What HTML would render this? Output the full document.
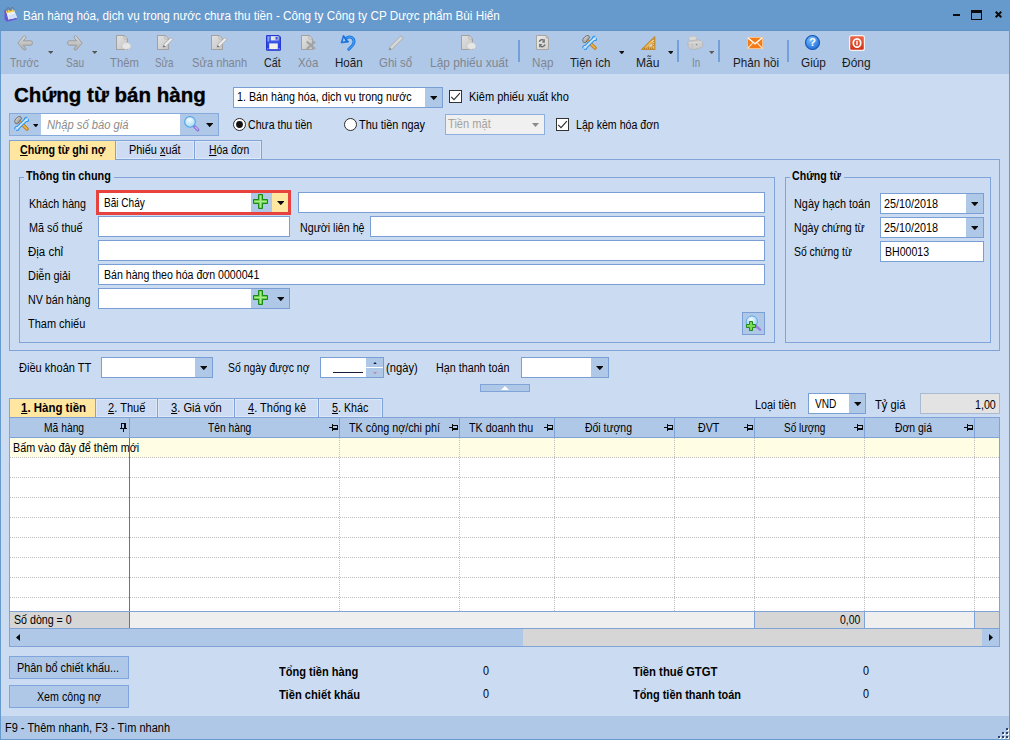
<!DOCTYPE html>
<html lang="vi">
<head>
<meta charset="utf-8">
<title>Bán hàng hóa, dịch vụ trong nước chưa thu tiền</title>
<style>
html,body{margin:0;padding:0;}
body{width:1010px;height:740px;overflow:hidden;background:#6699cc;font-family:"Liberation Sans",sans-serif;font-size:12px;color:#000;position:relative;}
.b{position:absolute;box-sizing:border-box;display:block;}
.x{position:absolute;white-space:nowrap;line-height:0;height:0;}
u{text-decoration:underline;}
</style>
</head>
<body>
<div class="b" style="left:0px;top:0px;width:1010px;height:740px;background:#6699cc;"></div>
<div class="b" style="left:1px;top:30px;width:1008px;height:1px;background:#5f93c8;"></div>
<div class="b" style="left:1px;top:31px;width:1008px;height:43px;background:#afc8e8;"></div>
<div class="b" style="left:1px;top:74px;width:1008px;height:642px;background:#cbdcf2;"></div>
<div class="b" style="left:1px;top:716px;width:1008px;height:23px;background:#afc8e8;"></div>
<div class="x" style="top:16.34px;font-size:12px;left:23.40px;transform:scaleX(0.9773);transform-origin:0 50%;color:#fff;">Bán hàng hóa, dịch vụ trong nước chưa thu tiền - Công ty Công ty CP Dược phẩm Bùi Hiển</div>
<div class="x" style="top:63.00px;font-size:13px;left:10.30px;transform:scaleX(0.8109);transform-origin:0 50%;color:#80868f;">Trước</div>
<div class="x" style="top:63.00px;font-size:13px;left:66.40px;transform:scaleX(0.7784);transform-origin:0 50%;color:#80868f;">Sau</div>
<div class="x" style="top:63.00px;font-size:13px;left:110.20px;transform:scaleX(0.8666);transform-origin:0 50%;color:#80868f;">Thêm</div>
<div class="x" style="top:63.00px;font-size:13px;left:155.20px;transform:scaleX(0.7517);transform-origin:0 50%;color:#80868f;">Sửa</div>
<div class="x" style="top:63.00px;font-size:13px;left:192.00px;transform:scaleX(0.8577);transform-origin:0 50%;color:#80868f;">Sửa nhanh</div>
<div class="x" style="top:63.00px;font-size:13px;left:264.40px;transform:scaleX(0.8204);transform-origin:0 50%;color:#1b1b1b;">Cất</div>
<div class="x" style="top:63.00px;font-size:13px;left:297.70px;transform:scaleX(0.8772);transform-origin:0 50%;color:#80868f;">Xóa</div>
<div class="x" style="top:63.00px;font-size:13px;left:334.60px;transform:scaleX(0.8913);transform-origin:0 50%;color:#1b1b1b;">Hoãn</div>
<div class="x" style="top:63.00px;font-size:13px;left:379.00px;transform:scaleX(0.8835);transform-origin:0 50%;color:#80868f;">Ghi sổ</div>
<div class="x" style="top:63.00px;font-size:13px;left:430.20px;transform:scaleX(0.9168);transform-origin:0 50%;color:#80868f;">Lập phiếu xuất</div>
<div class="x" style="top:63.00px;font-size:13px;left:531.60px;transform:scaleX(0.8975);transform-origin:0 50%;color:#80868f;">Nạp</div>
<div class="x" style="top:63.00px;font-size:13px;left:570.20px;transform:scaleX(0.8828);transform-origin:0 50%;color:#1b1b1b;">Tiện ích</div>
<div class="x" style="top:63.00px;font-size:13px;left:636.30px;transform:scaleX(0.9290);transform-origin:0 50%;color:#1b1b1b;">Mẫu</div>
<div class="x" style="top:63.00px;font-size:13px;left:692.00px;transform:scaleX(0.7562);transform-origin:0 50%;color:#80868f;">In</div>
<div class="x" style="top:63.00px;font-size:13px;left:732.50px;transform:scaleX(0.8962);transform-origin:0 50%;color:#1b1b1b;">Phản hồi</div>
<div class="x" style="top:63.00px;font-size:13px;left:801.10px;transform:scaleX(0.9070);transform-origin:0 50%;color:#1b1b1b;">Giúp</div>
<div class="x" style="top:63.00px;font-size:13px;left:842.00px;transform:scaleX(0.9203);transform-origin:0 50%;color:#1b1b1b;">Đóng</div>
<div class="b" style="left:518px;top:40px;width:2px;height:22px;background:#73a0d9;"></div>
<div class="b" style="left:677px;top:40px;width:2px;height:22px;background:#73a0d9;"></div>
<div class="b" style="left:718px;top:40px;width:2px;height:22px;background:#73a0d9;"></div>
<div class="b" style="left:787px;top:40px;width:2px;height:22px;background:#73a0d9;"></div>
<svg class="b" style="left:47.9px;top:50.7px" width="5.4" height="3" viewBox="0 0 5.4 3"><polygon points="0,0 5.4,0 2.7,3" fill="#555"/></svg>
<svg class="b" style="left:91.89999999999999px;top:50.7px" width="5.4" height="3" viewBox="0 0 5.4 3"><polygon points="0,0 5.4,0 2.7,3" fill="#555"/></svg>
<svg class="b" style="left:618.7px;top:50.6px" width="5.6" height="3.4" viewBox="0 0 5.6 3.4"><polygon points="0,0 5.6,0 2.8,3.4" fill="#111"/></svg>
<svg class="b" style="left:667.5px;top:50.6px" width="5.6" height="3.4" viewBox="0 0 5.6 3.4"><polygon points="0,0 5.6,0 2.8,3.4" fill="#111"/></svg>
<svg class="b" style="left:708.9px;top:50.8px" width="5.4" height="3.2" viewBox="0 0 5.4 3.2"><polygon points="0,0 5.4,0 2.7,3.2" fill="#5c5c5c"/></svg>
<svg class="b" style="left:16.5px;top:34.5px" width="16" height="16" viewBox="0 0 16 16"><defs><linearGradient id="ag" x1="0" y1="0" x2="0" y2="1"><stop offset="0" stop-color="#dadada"/><stop offset="1" stop-color="#aeaeae"/></linearGradient></defs><path d="M0.8 8 L6.6 1.2 Q7.6 0.4 8.6 1.2 Q9.4 2 8.6 3 L6.2 5.8 L13.8 5.8 Q15.4 5.8 15.4 8 Q15.4 10.2 13.8 10.2 L6.2 10.2 L8.6 13 Q9.4 14 8.6 14.8 Q7.6 15.6 6.6 14.8 Z" fill="url(#ag)" stroke="#9c9c9c" stroke-width="1" stroke-linejoin="round"/></svg>
<svg class="b" style="left:66.5px;top:34.5px" width="16" height="16" viewBox="0 0 16 16"><g transform="translate(16,0) scale(-1,1)"><defs><linearGradient id="ag2" x1="0" y1="0" x2="0" y2="1"><stop offset="0" stop-color="#dadada"/><stop offset="1" stop-color="#aeaeae"/></linearGradient></defs><path d="M0.8 8 L6.6 1.2 Q7.6 0.4 8.6 1.2 Q9.4 2 8.6 3 L6.2 5.8 L13.8 5.8 Q15.4 5.8 15.4 8 Q15.4 10.2 13.8 10.2 L6.2 10.2 L8.6 13 Q9.4 14 8.6 14.8 Q7.6 15.6 6.6 14.8 Z" fill="url(#ag2)" stroke="#9c9c9c" stroke-width="1" stroke-linejoin="round"/></g></svg>
<svg class="b" style="left:116px;top:35px" width="17" height="16" viewBox="0 0 17 16"><defs><linearGradient id="dg1" x1="0" y1="0" x2="1" y2="1"><stop offset="0" stop-color="#e3e3e3"/><stop offset="1" stop-color="#c4c4c4"/></linearGradient></defs><path d="M0.5 0.5 H8 L11.5 4 V14.5 H0.5 Z" fill="url(#dg1)" stroke="#a2a2a2" stroke-width="1.1"/><path d="M8 0.5 V4 H11.5 Z" fill="#efefef" stroke="#a9a9a9" stroke-width="0.8"/><path d="M10 6.2 l1.2 0.9 1.5-0.5 0.7 1.4 1.5 0.3 0 1.6 1.2 1-0.9 1.3 0.3 1.5-1.5 0.5-0.6 1.4-1.6-0.2-1.2 1-1.3-1-1.6 0.2-0.5-1.5-1.4-0.7 0.4-1.5-0.8-1.4 1.2-1 0.1-1.6 1.6-0.2 0.8-1.4 1.5 0.6 z" fill="#e6e6e6" stroke="#c4c4c4" stroke-width="0.6" transform="translate(0.8,2.5) scale(0.9,0.75)"/></svg>
<svg class="b" style="left:157px;top:35px" width="17" height="16" viewBox="0 0 17 16"><defs><linearGradient id="dg2" x1="0" y1="0" x2="1" y2="1"><stop offset="0" stop-color="#e3e3e3"/><stop offset="1" stop-color="#c4c4c4"/></linearGradient></defs><path d="M0.5 0.5 H8 L11.5 4 V14.5 H0.5 Z" fill="url(#dg2)" stroke="#a2a2a2" stroke-width="1.1"/><path d="M8 0.5 V4 H11.5 Z" fill="#efefef" stroke="#a9a9a9" stroke-width="0.8"/><path d="M6.2 12.2 L7 9.2 L13.8 2.6 L15.8 4.6 L9 11.4 Z" fill="#ededed" stroke="#a9a9a9" stroke-width="0.9" stroke-linejoin="round"/><path d="M6.2 12.2 L6.8 10.2 L8.2 11.6 Z" fill="#555"/></svg>
<svg class="b" style="left:211px;top:35px" width="17" height="16" viewBox="0 0 17 16"><defs><linearGradient id="dg3" x1="0" y1="0" x2="1" y2="1"><stop offset="0" stop-color="#e3e3e3"/><stop offset="1" stop-color="#c4c4c4"/></linearGradient></defs><path d="M0.5 0.5 H8 L11.5 4 V14.5 H0.5 Z" fill="url(#dg3)" stroke="#a2a2a2" stroke-width="1.1"/><path d="M8 0.5 V4 H11.5 Z" fill="#efefef" stroke="#a9a9a9" stroke-width="0.8"/><path d="M6.2 12.2 L7 9.2 L13.8 2.6 L15.8 4.6 L9 11.4 Z" fill="#ededed" stroke="#a9a9a9" stroke-width="0.9" stroke-linejoin="round"/><path d="M6.2 12.2 L6.8 10.2 L8.2 11.6 Z" fill="#555"/></svg>
<svg class="b" style="left:301px;top:35px" width="17" height="16" viewBox="0 0 17 16"><defs><linearGradient id="dg4" x1="0" y1="0" x2="1" y2="1"><stop offset="0" stop-color="#e3e3e3"/><stop offset="1" stop-color="#c4c4c4"/></linearGradient></defs><path d="M0.5 0.5 H8 L11.5 4 V14.5 H0.5 Z" fill="url(#dg4)" stroke="#a2a2a2" stroke-width="1.1"/><path d="M8 0.5 V4 H11.5 Z" fill="#efefef" stroke="#a9a9a9" stroke-width="0.8"/><path d="M5.8 6.5 L14 14 M14 6.5 L5.8 14" stroke="#a2a2a2" stroke-width="2.2"/></svg>
<svg class="b" style="left:461px;top:35px" width="17" height="16" viewBox="0 0 17 16"><defs><linearGradient id="dg5" x1="0" y1="0" x2="1" y2="1"><stop offset="0" stop-color="#e3e3e3"/><stop offset="1" stop-color="#c4c4c4"/></linearGradient></defs><path d="M0.5 0.5 H8 L11.5 4 V14.5 H0.5 Z" fill="url(#dg5)" stroke="#a2a2a2" stroke-width="1.1"/><path d="M8 0.5 V4 H11.5 Z" fill="#efefef" stroke="#a9a9a9" stroke-width="0.8"/><path d="M10 6.2 l1.2 0.9 1.5-0.5 0.7 1.4 1.5 0.3 0 1.6 1.2 1-0.9 1.3 0.3 1.5-1.5 0.5-0.6 1.4-1.6-0.2-1.2 1-1.3-1-1.6 0.2-0.5-1.5-1.4-0.7 0.4-1.5-0.8-1.4 1.2-1 0.1-1.6 1.6-0.2 0.8-1.4 1.5 0.6 z" fill="#e6e6e6" stroke="#c4c4c4" stroke-width="0.6" transform="translate(0.8,2.5) scale(0.9,0.75)"/></svg>
<svg class="b" style="left:265.5px;top:34.5px" width="15" height="16" viewBox="0 0 15 16"><defs><linearGradient id="sg" x1="0" y1="0" x2="0" y2="1"><stop offset="0" stop-color="#5f7cf2"/><stop offset="0.5" stop-color="#3350e8"/><stop offset="1" stop-color="#2238dc"/></linearGradient><linearGradient id="sg2" x1="0" y1="0" x2="1" y2="0"><stop offset="0" stop-color="#f2f2f4"/><stop offset="1" stop-color="#bfc0c8"/></linearGradient></defs><path d="M0.6 0.6 H13 L14.4 2 V15.2 H0.6 Z" fill="url(#sg)" stroke="#1c2fd0" stroke-width="1"/><rect x="1.6" y="1.4" width="1.6" height="5" fill="#8ea2f6"/><rect x="5" y="1.2" width="7.6" height="4.2" fill="url(#sg2)"/><rect x="9.6" y="2" width="2" height="2.6" fill="#3350e8"/><rect x="3.2" y="8.4" width="8.6" height="5.8" fill="#f3f0ea"/><rect x="1.4" y="13.4" width="1" height="1" fill="#dfe4ff"/><rect x="12.6" y="13.4" width="1" height="1" fill="#dfe4ff"/></svg>
<svg class="b" style="left:340px;top:34px" width="17" height="17" viewBox="0 0 17 17"><path d="M6 4.4 C9.5 1.6 14.2 3.4 14 8 C13.8 11 11 13 8.8 15.2" fill="none" stroke="#1c72dc" stroke-width="3" stroke-linecap="round"/><path d="M6 4.4 C9.5 1.6 14.2 3.4 14 8 C13.8 11 11 13 8.8 15.2" fill="none" stroke="#3f9cf3" stroke-width="1.3" stroke-linecap="round"/><path d="M3.4 1 L1 9 L8.8 8 Z" fill="#1c72dc" stroke="#1c72dc" stroke-width="0.8" stroke-linejoin="round"/><path d="M3.7 3.8 L2.7 7.4 L5.6 7 Z" fill="#a6cdf5"/></svg>
<svg class="b" style="left:387.5px;top:34.5px" width="16" height="16" viewBox="0 0 16 16"><path d="M1 15 L2 11.6 L12.2 1.4 Q13 0.7 13.8 1.5 L14.6 2.3 Q15.3 3.1 14.6 3.8 L4.4 14 Z" fill="#d7d7d7" stroke="#a8a8a8" stroke-width="0.9" stroke-linejoin="round"/><path d="M1 15 L1.8 12.4 L3.6 14.2 Z" fill="#8a8a8a"/></svg>
<svg class="b" style="left:536px;top:35px" width="13" height="15" viewBox="0 0 13 15"><defs><linearGradient id="ng" x1="0" y1="0" x2="1" y2="1"><stop offset="0" stop-color="#ececec"/><stop offset="1" stop-color="#cfcfcf"/></linearGradient></defs><path d="M0.5 0.5 H10.2 L12.5 3 V14.5 H0.5 Z" fill="url(#ng)" stroke="#a9a6a2" stroke-width="1"/><path d="M10.2 0.5 V3 H12.5 Z" fill="#bdbdbd" stroke="#a9a6a2" stroke-width="0.6"/><path d="M3.3 6.8 C4 4.6 6.4 4.2 7.8 5.2" fill="none" stroke="#6e6e6e" stroke-width="1.5"/><path d="M8.8 3.8 L8.8 7.8 L5.8 7.4 Z" fill="#6e6e6e"/><path d="M9 9.6 C8.2 11.8 5.8 12.2 4.4 11.2" fill="none" stroke="#6e6e6e" stroke-width="1.5"/><path d="M3.2 12.8 L3.2 8.8 L6.4 9.2 Z" fill="#6e6e6e"/></svg>
<svg class="b" style="left:582px;top:34.5px" width="15" height="15" viewBox="0 0 15 15"><defs><linearGradient id="hm1" x1="0" y1="0" x2="1" y2="1"><stop offset="0" stop-color="#f0f0f0"/><stop offset="1" stop-color="#7c7c7c"/></linearGradient></defs><path d="M5.2 5.4 L13 13" stroke="#b87a1c" stroke-width="3.4" stroke-linecap="round"/><path d="M5.2 5.4 L13 13" stroke="#f2b548" stroke-width="1.7" stroke-linecap="round"/><path d="M0.8 6.4 Q0.2 4 2.4 2.2 L4.6 0.6 Q6 0 7 1.2 L7.6 2.6 L3.4 7.8 L1.6 7.6 Z" fill="url(#hm1)" stroke="#5c5c5c" stroke-width="0.8" stroke-linejoin="round"/><path d="M3 12.6 L12.4 3.4" stroke="#2f95ea" stroke-width="3.8" stroke-linecap="butt"/><circle cx="12.6" cy="3.4" r="2.7" fill="#2f95ea"/><circle cx="2.9" cy="12.5" r="2.6" fill="#2f95ea"/><path d="M3 12.6 L12.4 3.4" stroke="#cfe8fc" stroke-width="1.7"/><circle cx="12.6" cy="3.4" r="1.5" fill="#cfe8fc"/><circle cx="2.9" cy="12.5" r="1.4" fill="#cfe8fc"/><path d="M12.8 3.2 L15.6 0.4" stroke="#afc8e8" stroke-width="2"/><path d="M2.8 12.6 L0 15.4" stroke="#afc8e8" stroke-width="1.8"/></svg>
<svg class="b" style="left:640.5px;top:35.5px" width="15" height="14" viewBox="0 0 15 14"><defs><linearGradient id="rg" x1="0" y1="0" x2="0" y2="1"><stop offset="0" stop-color="#f8d88e"/><stop offset="1" stop-color="#eeb550"/></linearGradient></defs><path d="M13.8 0.8 V13.4 H0.8 Z" fill="url(#rg)" stroke="#c58a30" stroke-width="1.2" stroke-linejoin="round"/><path d="M11.2 6.6 V11 H6.6 Z" fill="#dfe9f6" stroke="#c58a30" stroke-width="0.8"/><path d="M3.5 13 v-1.4 M5.5 13 v-1.4 M7.5 13 v-1.4 M9.5 13 v-1.4 M11.5 13 v-1.4 M13.4 3.5 h-1.2 M13.4 5.5 h-1.2 M13.4 7.5 h-1.2 M13.4 9.5 h-1.2" stroke="#9c6a18" stroke-width="0.7"/></svg>
<svg class="b" style="left:687px;top:35px" width="17" height="16" viewBox="0 0 17 16"><path d="M2.6 6.2 L1.9 2.6 Q1.8 1.5 2.9 1.4 L7.6 1 Q8.6 1 8.9 1.9 L10.2 6 Z" fill="#d9d9d9" stroke="#bcbcbc" stroke-width="0.8"/><path d="M1 8.6 Q0.9 6.4 3 6 L10.4 4.8 Q12 4.6 13.2 5.4 L15 6.8 Q15.9 7.6 15.8 8.8 L15.6 11 Q15.4 12.2 14.2 12.6 L6.4 14.6 Q4.8 14.9 3.6 14 L1.8 12.6 Q1 12 1 10.8 Z" fill="#cdcdcd" stroke="#b3b3b3" stroke-width="0.8"/><path d="M5.2 8 L5.2 14.4" stroke="#bdbdbd" stroke-width="0.8"/><path d="M1.6 7.4 L5.2 8 L15 6.8" fill="none" stroke="#dedede" stroke-width="0.9"/><circle cx="9.6" cy="9.6" r="0.8" fill="#909090"/></svg>
<svg class="b" style="left:747px;top:37px" width="16" height="12" viewBox="0 0 16 12"><rect x="0" y="0" width="16" height="12" fill="#f47c18"/><rect x="0.4" y="0.4" width="15.2" height="11.2" fill="none" stroke="#fbd3a8" stroke-width="0.8"/><path d="M1 1 L8 6.8 L15 1" fill="none" stroke="#fff" stroke-width="1.5"/><path d="M1 11 L5.6 6.2 M15 11 L10.4 6.2" fill="none" stroke="#fde3c8" stroke-width="1.1"/></svg>
<svg class="b" style="left:805px;top:35px" width="15" height="15" viewBox="0 0 15 15"><defs><radialGradient id="hg" cx="0.4" cy="0.3" r="0.8"><stop offset="0" stop-color="#7cc0ff"/><stop offset="1" stop-color="#1565d8"/></radialGradient></defs><circle cx="7.5" cy="7.5" r="7" fill="url(#hg)" stroke="#1d5cb8" stroke-width="1.2"/><text x="7.5" y="11.4" font-family="Liberation Sans, sans-serif" font-size="11" font-weight="bold" fill="#fff" text-anchor="middle">?</text></svg>
<svg class="b" style="left:849px;top:35px" width="16" height="16" viewBox="0 0 16 16"><defs><linearGradient id="cg" x1="0" y1="0" x2="0" y2="1"><stop offset="0" stop-color="#f0694a"/><stop offset="1" stop-color="#cf2f14"/></linearGradient></defs><rect x="0.6" y="0.6" width="14.8" height="14.8" rx="2" fill="url(#cg)" stroke="#f3f3f3" stroke-width="1.2"/><ellipse cx="8" cy="8" rx="3.7" ry="4.2" fill="none" stroke="#fff" stroke-width="1.7"/><rect x="7.3" y="5.8" width="1.4" height="4.4" fill="#fff"/></svg>
<svg class="b" style="left:4px;top:7px" width="14" height="15" viewBox="0 0 14 15"><path d="M0.4 3 L2.2 2.4 L4.2 12.6 L12.4 10.8 L12.8 12.2 L3 14.8 L0.6 12.6 Z" fill="#6a58d2"/><path d="M2 3.8 L9.8 2.6 L13 10.4 L4.4 12.4 Z" fill="#e9f1ff"/><path d="M5 8 L11.4 6.6 L13 10.4 L4.4 12.4 Z" fill="#cfe0fb"/><path d="M2 3.8 L9.8 2.6 L10.6 4.6 L2.6 6.2 Z" fill="#f7d046"/><path d="M3.4 4.6 C2.4 1.4 3.6 0.2 4.6 0.6 C5.6 1 6 2.8 6 4" fill="none" stroke="#6e6e78" stroke-width="0.9"/><path d="M7.2 4 C6.4 0.8 7.6 -0.2 8.6 0.3 C9.6 0.8 9.8 2.4 9.8 3.4" fill="none" stroke="#6e6e78" stroke-width="0.9"/></svg>
<div class="b" style="left:953px;top:14px;width:7px;height:2px;background:#0b0b0b;"></div>
<div class="b" style="left:971px;top:10px;width:11px;height:10px;border:1px solid #0b0b0b;border-top-width:3px;"></div>
<svg class="b" style="left:995px;top:11px" width="7" height="7" viewBox="0 0 7 7"><path d="M0.7 0.7 L6.3 6.3 M6.3 0.7 L0.7 6.3" stroke="#0b0b0b" stroke-width="2"/></svg>
<div class="x" style="top:94.72px;font-size:21px;left:13.80px;transform:scaleX(0.9783);transform-origin:0 50%;font-weight:bold;-webkit-text-stroke:0.35px #000;">Chứng từ bán hàng</div>
<div class="b" style="left:233px;top:87px;width:210px;height:21px;background:#fff;border:1px solid #7a9fd5;"></div>
<div class="b" style="left:425px;top:88px;width:17px;height:19px;background:#afc8e8;"></div>
<svg class="b" style="left:429.7px;top:96px" width="7.6" height="4.2" viewBox="0 0 7.6 4.2"><polygon points="0,0 7.6,0 3.8,4.2" fill="#0a0a0a"/></svg>
<div class="x" style="top:96.84px;font-size:12px;left:237.40px;transform:scaleX(0.8937);transform-origin:0 50%;">1. Bán hàng hóa, dịch vụ trong nước</div>
<div class="b" style="left:449px;top:90px;width:13px;height:13px;background:#fff;border:1px solid #333;"></div>
<svg class="b" style="left:449px;top:90px" width="13" height="13" viewBox="0 0 13 13"><path d="M2.2 6.8 L5 9.6 L10.9 3.2" fill="none" stroke="#2e2e2e" stroke-width="1.15"/></svg>
<div class="x" style="top:96.84px;font-size:12px;left:468.50px;transform:scaleX(0.9178);transform-origin:0 50%;">Kiêm phiếu xuất kho</div>
<div class="b" style="left:9px;top:113px;width:210px;height:23px;background:#afc8e8;border:1px solid #86aadb;"></div>
<div class="b" style="left:41px;top:114px;width:139px;height:21px;background:#fff;"></div>
<div class="x" style="top:124.84px;font-size:12px;left:46.80px;transform:scaleX(0.9324);transform-origin:0 50%;color:#8c8c8c;font-style:italic;">Nhập số báo giá</div>
<svg class="b" style="left:32.7px;top:124px" width="5.6" height="3.4" viewBox="0 0 5.6 3.4"><polygon points="0,0 5.6,0 2.8,3.4" fill="#0a0a0a"/></svg>
<svg class="b" style="left:205.8px;top:123px" width="7.4" height="4.2" viewBox="0 0 7.4 4.2"><polygon points="0,0 7.4,0 3.7,4.2" fill="#0a0a0a"/></svg>
<svg class="b" style="left:14px;top:116px" width="15" height="15" viewBox="0 0 15 15"><defs><linearGradient id="hm2" x1="0" y1="0" x2="1" y2="1"><stop offset="0" stop-color="#f0f0f0"/><stop offset="1" stop-color="#7c7c7c"/></linearGradient></defs><path d="M5.2 5.4 L13 13" stroke="#b87a1c" stroke-width="3.4" stroke-linecap="round"/><path d="M5.2 5.4 L13 13" stroke="#f2b548" stroke-width="1.7" stroke-linecap="round"/><path d="M0.8 6.4 Q0.2 4 2.4 2.2 L4.6 0.6 Q6 0 7 1.2 L7.6 2.6 L3.4 7.8 L1.6 7.6 Z" fill="url(#hm2)" stroke="#5c5c5c" stroke-width="0.8" stroke-linejoin="round"/><path d="M3 12.6 L12.4 3.4" stroke="#2f95ea" stroke-width="3.8" stroke-linecap="butt"/><circle cx="12.6" cy="3.4" r="2.7" fill="#2f95ea"/><circle cx="2.9" cy="12.5" r="2.6" fill="#2f95ea"/><path d="M3 12.6 L12.4 3.4" stroke="#cfe8fc" stroke-width="1.7"/><circle cx="12.6" cy="3.4" r="1.5" fill="#cfe8fc"/><circle cx="2.9" cy="12.5" r="1.4" fill="#cfe8fc"/><path d="M12.8 3.2 L15.6 0.4" stroke="#afc8e8" stroke-width="2"/><path d="M2.8 12.6 L0 15.4" stroke="#afc8e8" stroke-width="1.8"/></svg>
<svg class="b" style="left:184px;top:116px" width="16" height="16" viewBox="0 0 16 16"><defs><radialGradient id="mg" cx="0.45" cy="0.3" r="0.75"><stop offset="0" stop-color="#f4fbff"/><stop offset="0.6" stop-color="#c4e6f6"/><stop offset="1" stop-color="#9fd0f2"/></radialGradient></defs><path d="M10.6 10.6 L13.8 13.8" stroke="#8f76dc" stroke-width="3.2" stroke-linecap="round"/><path d="M11.4 11.2 L13.6 13.4" stroke="#c6b6f2" stroke-width="1.2" stroke-linecap="round"/><circle cx="6" cy="5.9" r="5.3" fill="url(#mg)" stroke="#4fa4e8" stroke-width="1.1"/></svg>
<svg class="b" style="left:233.0px;top:118.0px" width="13" height="13" viewBox="0 0 13 13"><circle cx="6.5" cy="6.5" r="6" fill="#fff" stroke="#2b2b2b" stroke-width="1"/><circle cx="6.5" cy="6.5" r="3.4" fill="#111"/></svg>
<div class="x" style="top:124.84px;font-size:12px;left:248.30px;transform:scaleX(0.8825);transform-origin:0 50%;">Chưa thu tiền</div>
<svg class="b" style="left:343.5px;top:118.0px" width="13" height="13" viewBox="0 0 13 13"><circle cx="6.5" cy="6.5" r="6" fill="#fff" stroke="#2b2b2b" stroke-width="1"/></svg>
<div class="x" style="top:124.84px;font-size:12px;left:359.30px;transform:scaleX(0.9076);transform-origin:0 50%;">Thu tiền ngay</div>
<div class="b" style="left:445px;top:114px;width:100px;height:21px;background:#f0f0f0;border:1px solid #8cafdd;"></div>
<div class="x" style="top:123.84px;font-size:12px;left:448.10px;transform:scaleX(0.9279);transform-origin:0 50%;color:#a6a29c;">Tiền mặt</div>
<svg class="b" style="left:531.8px;top:123px" width="7" height="4" viewBox="0 0 7 4"><polygon points="0,0 7,0 3.5,4" fill="#8a8a8a"/></svg>
<div class="b" style="left:556px;top:118px;width:13px;height:13px;background:#fff;border:1px solid #333;"></div>
<svg class="b" style="left:556px;top:118px" width="13" height="13" viewBox="0 0 13 13"><path d="M2.2 6.8 L5 9.6 L10.9 3.2" fill="none" stroke="#2e2e2e" stroke-width="1.15"/></svg>
<div class="x" style="top:124.84px;font-size:12px;left:575.50px;transform:scaleX(0.8846);transform-origin:0 50%;">Lập kèm hóa đơn</div>
<div class="b" style="left:9px;top:159px;width:991px;height:192px;border:1px solid #7fa3d6;"></div>
<div class="b" style="left:9px;top:140px;width:106px;height:20px;background:#ffe6a1;border-left:1px solid #7fa3d6;border-top:1px solid #7fa3d6;"></div>
<div class="b" style="left:115px;top:140px;width:80px;height:20px;background:#cddcf2;border:1px solid #7fa3d6;box-shadow:inset 0 0 0 1px #dde8f8;"></div>
<div class="b" style="left:194px;top:140px;width:68px;height:20px;background:#cddcf2;border:1px solid #7fa3d6;box-shadow:inset 0 0 0 1px #dde8f8;"></div>
<div class="x" style="top:149.84px;font-size:12px;left:20.00px;transform:scaleX(0.8896);transform-origin:0 50%;font-weight:bold;"><u>C</u>hứng từ ghi nợ</div>
<div class="x" style="top:149.84px;font-size:12px;left:129.20px;transform:scaleX(0.9100);transform-origin:0 50%;">Phiếu <u>x</u>uất</div>
<div class="x" style="top:149.84px;font-size:12px;left:208.50px;transform:scaleX(0.8634);transform-origin:0 50%;"><u>H</u>óa đơn</div>
<div class="b" style="left:19px;top:177px;width:756px;height:166px;border:1px solid #80a4d8;"></div>
<div class="b" style="left:785px;top:177px;width:206px;height:166px;border:1px solid #80a4d8;"></div>
<div class="b" style="left:24px;top:170px;width:90px;height:16px;background:#cbdcf2;"></div>
<div class="b" style="left:790px;top:170px;width:54px;height:16px;background:#cbdcf2;"></div>
<div class="x" style="top:175.84px;font-size:12px;left:25.80px;transform:scaleX(0.9024);transform-origin:0 50%;font-weight:bold;">Thông tin chung</div>
<div class="x" style="top:175.84px;font-size:12px;left:791.70px;transform:scaleX(0.8831);transform-origin:0 50%;font-weight:bold;">Chứng từ</div>
<div class="x" style="top:203.84px;font-size:12px;left:28.70px;transform:scaleX(0.8898);transform-origin:0 50%;">Khách hàng</div>
<div class="x" style="top:227.84px;font-size:12px;left:28.70px;transform:scaleX(0.8994);transform-origin:0 50%;">Mã số thuế</div>
<div class="x" style="top:251.84px;font-size:12px;left:27.80px;transform:scaleX(0.9567);transform-origin:0 50%;">Địa chỉ</div>
<div class="x" style="top:275.84px;font-size:12px;left:28.40px;transform:scaleX(0.9103);transform-origin:0 50%;">Diễn giải</div>
<div class="x" style="top:299.84px;font-size:12px;left:28.40px;transform:scaleX(0.8906);transform-origin:0 50%;">NV bán hàng</div>
<div class="x" style="top:323.84px;font-size:12px;left:28.40px;transform:scaleX(0.9138);transform-origin:0 50%;">Tham chiếu</div>
<div class="x" style="top:227.84px;font-size:12px;left:300.30px;transform:scaleX(0.8883);transform-origin:0 50%;">Người liên hệ</div>
<div class="b" style="left:96px;top:190px;width:195px;height:25px;background:#e8423e;"></div>
<div class="b" style="left:99px;top:193px;width:189px;height:19px;background:#fff;"></div>
<div class="b" style="left:251px;top:193px;width:21px;height:19px;background:#afc8e8;"></div>
<div class="b" style="left:272px;top:193px;width:16px;height:19px;background:#ffe6a1;"></div>
<svg class="b" style="left:253px;top:194px" width="15" height="15" viewBox="0 0 15 15"><path d="M5.5 0.5 H9.5 V5.5 H14.5 V9.5 H9.5 V14.5 H5.5 V9.5 H0.5 V5.5 H5.5 Z" fill="#58c63c" stroke="#178a14" stroke-width="1"/><path d="M7.5 2 V13 M2 7.5 H13" stroke="#a8ec8c" stroke-width="1.6" stroke-linecap="round"/></svg>
<svg class="b" style="left:276.7px;top:201px" width="7.6" height="4.2" viewBox="0 0 7.6 4.2"><polygon points="0,0 7.6,0 3.8,4.2" fill="#0a0a0a"/></svg>
<div class="x" style="top:203.34px;font-size:12px;left:103.80px;transform:scaleX(0.8380);transform-origin:0 50%;">Bãi Cháy</div>
<div class="b" style="left:298px;top:192px;width:467px;height:21px;background:#fff;border:1px solid #7a9fd5;"></div>
<div class="b" style="left:98px;top:216px;width:192px;height:21px;background:#fff;border:1px solid #7a9fd5;"></div>
<div class="b" style="left:370px;top:216px;width:395px;height:21px;background:#fff;border:1px solid #7a9fd5;"></div>
<div class="b" style="left:98px;top:240px;width:667px;height:21px;background:#fff;border:1px solid #7a9fd5;"></div>
<div class="b" style="left:98px;top:264px;width:667px;height:21px;background:#fff;border:1px solid #7a9fd5;"></div>
<div class="x" style="top:275.34px;font-size:12px;left:103.60px;transform:scaleX(0.8822);transform-origin:0 50%;">Bán hàng theo hóa đơn 0000041</div>
<div class="b" style="left:98px;top:288px;width:192px;height:21px;background:#fff;border:1px solid #7a9fd5;"></div>
<div class="b" style="left:251px;top:289px;width:38px;height:19px;background:#afc8e8;"></div>
<svg class="b" style="left:253px;top:290px" width="15" height="15" viewBox="0 0 15 15"><path d="M5.5 0.5 H9.5 V5.5 H14.5 V9.5 H9.5 V14.5 H5.5 V9.5 H0.5 V5.5 H5.5 Z" fill="#58c63c" stroke="#178a14" stroke-width="1"/><path d="M7.5 2 V13 M2 7.5 H13" stroke="#a8ec8c" stroke-width="1.6" stroke-linecap="round"/></svg>
<svg class="b" style="left:276.7px;top:297px" width="7.6" height="4.2" viewBox="0 0 7.6 4.2"><polygon points="0,0 7.6,0 3.8,4.2" fill="#0a0a0a"/></svg>
<div class="b" style="left:742px;top:312px;width:23px;height:23px;background:#afc8e8;border:1px solid #7a9fd5;"></div>
<svg class="b" style="left:745px;top:315px" width="17" height="17" viewBox="0 0 17 17"><defs><radialGradient id="mg2" cx="0.45" cy="0.3" r="0.8"><stop offset="0" stop-color="#f2faff"/><stop offset="1" stop-color="#8cc4f0"/></radialGradient></defs><path d="M11 11 L15 14.6" stroke="#9a80dc" stroke-width="2.6" stroke-linecap="round"/><circle cx="6.8" cy="6.6" r="5.6" fill="url(#mg2)" stroke="#5aa6e6" stroke-width="1"/><path d="M4.5 6.5 H7.5 V9.5 H10.5 V12.5 H7.5 V15.5 H4.5 V12.5 H1.5 V9.5 H4.5 Z" fill="#7ed957" stroke="#1f8a1c" stroke-width="1"/></svg>
<div class="x" style="top:203.84px;font-size:12px;left:794.40px;transform:scaleX(0.9065);transform-origin:0 50%;">Ngày hạch toán</div>
<div class="x" style="top:227.84px;font-size:12px;left:794.40px;transform:scaleX(0.8825);transform-origin:0 50%;">Ngày chứng từ</div>
<div class="x" style="top:251.84px;font-size:12px;left:794.40px;transform:scaleX(0.8672);transform-origin:0 50%;">Số chứng từ</div>
<div class="b" style="left:880px;top:193px;width:104px;height:21px;background:#fff;border:1px solid #7a9fd5;"></div>
<div class="b" style="left:966px;top:194px;width:17px;height:19px;background:#afc8e8;"></div>
<svg class="b" style="left:970.9000000000001px;top:202px" width="7.6" height="4.2" viewBox="0 0 7.6 4.2"><polygon points="0,0 7.6,0 3.8,4.2" fill="#0a0a0a"/></svg>
<div class="x" style="top:203.84px;font-size:12px;left:884.20px;transform:scaleX(0.9007);transform-origin:0 50%;">25/10/2018</div>
<div class="b" style="left:880px;top:217px;width:104px;height:21px;background:#fff;border:1px solid #7a9fd5;"></div>
<div class="b" style="left:966px;top:218px;width:17px;height:19px;background:#afc8e8;"></div>
<svg class="b" style="left:970.9000000000001px;top:226px" width="7.6" height="4.2" viewBox="0 0 7.6 4.2"><polygon points="0,0 7.6,0 3.8,4.2" fill="#0a0a0a"/></svg>
<div class="x" style="top:227.84px;font-size:12px;left:884.20px;transform:scaleX(0.9007);transform-origin:0 50%;">25/10/2018</div>
<div class="b" style="left:880px;top:241px;width:104px;height:21px;background:#fff;border:1px solid #7a9fd5;"></div>
<div class="x" style="top:251.84px;font-size:12px;left:885.40px;transform:scaleX(0.8812);transform-origin:0 50%;">BH00013</div>
<div class="x" style="top:367.84px;font-size:12px;left:19.00px;transform:scaleX(0.9212);transform-origin:0 50%;">Điều khoản TT</div>
<div class="b" style="left:101px;top:357px;width:112px;height:21px;background:#fff;border:1px solid #7a9fd5;"></div>
<div class="b" style="left:195px;top:358px;width:17px;height:19px;background:#afc8e8;"></div>
<svg class="b" style="left:199.79999999999998px;top:366px" width="7.6" height="4.2" viewBox="0 0 7.6 4.2"><polygon points="0,0 7.6,0 3.8,4.2" fill="#0a0a0a"/></svg>
<div class="x" style="top:367.84px;font-size:12px;left:227.50px;transform:scaleX(0.8686);transform-origin:0 50%;">Số ngày được nợ</div>
<div class="b" style="left:320px;top:357px;width:64px;height:21px;background:#fff;border:1px solid #7a9fd5;"></div>
<div class="b" style="left:366px;top:358px;width:17px;height:9px;background:#afc8e8;"></div>
<div class="b" style="left:366px;top:368px;width:17px;height:9px;background:#afc8e8;"></div>
<div class="b" style="left:333px;top:372px;width:30px;height:1px;background:#1a1a3a;"></div>
<svg class="b" style="left:372.5px;top:361.6px" width="4" height="2.4" viewBox="0 0 4 2.4"><polygon points="0,2.4 4,2.4 2,0" fill="#101030"/></svg>
<svg class="b" style="left:372.5px;top:371.6px" width="4" height="2.4" viewBox="0 0 4 2.4"><polygon points="0,0 4,0 2.0,2.4" fill="#c08a9c"/></svg>
<div class="x" style="top:367.84px;font-size:12px;left:386.20px;transform:scaleX(0.9319);transform-origin:0 50%;">(ngày)</div>
<div class="x" style="top:367.84px;font-size:12px;left:435.60px;transform:scaleX(0.8957);transform-origin:0 50%;">Hạn thanh toán</div>
<div class="b" style="left:521px;top:357px;width:88px;height:21px;background:#fff;border:1px solid #7a9fd5;"></div>
<div class="b" style="left:591px;top:358px;width:17px;height:19px;background:#afc8e8;"></div>
<svg class="b" style="left:595.9000000000001px;top:366px" width="7.6" height="4.2" viewBox="0 0 7.6 4.2"><polygon points="0,0 7.6,0 3.8,4.2" fill="#0a0a0a"/></svg>
<div class="b" style="left:480px;top:384px;width:50px;height:8px;background:#afc8e8;border:1px solid #80a4d8;"></div>
<svg class="b" style="left:501px;top:386px" width="8" height="4" viewBox="0 0 8 4"><polygon points="0,4 8,4 4,0" fill="#fff"/></svg>
<div class="b" style="left:9px;top:398px;width:86px;height:20px;background:#ffe6a1;border-left:1px solid #7fa3d6;border-top:1px solid #7fa3d6;"></div>
<div class="b" style="left:95px;top:398px;width:63px;height:20px;background:#cddcf2;border:1px solid #7fa3d6;box-shadow:inset 0 0 0 1px #dde8f8;"></div>
<div class="x" style="top:407.84px;font-size:12px;left:107.70px;transform:scaleX(0.9238);transform-origin:0 50%;"><u>2</u>. Thuế</div>
<div class="b" style="left:157px;top:398px;width:78px;height:20px;background:#cddcf2;border:1px solid #7fa3d6;box-shadow:inset 0 0 0 1px #dde8f8;"></div>
<div class="x" style="top:407.84px;font-size:12px;left:171.10px;transform:scaleX(0.9268);transform-origin:0 50%;"><u>3</u>. Giá vốn</div>
<div class="b" style="left:234px;top:398px;width:85px;height:20px;background:#cddcf2;border:1px solid #7fa3d6;box-shadow:inset 0 0 0 1px #dde8f8;"></div>
<div class="x" style="top:407.84px;font-size:12px;left:247.80px;transform:scaleX(0.9184);transform-origin:0 50%;"><u>4</u>. Thống kê</div>
<div class="b" style="left:318px;top:398px;width:65px;height:20px;background:#cddcf2;border:1px solid #7fa3d6;box-shadow:inset 0 0 0 1px #dde8f8;"></div>
<div class="x" style="top:407.84px;font-size:12px;left:331.70px;transform:scaleX(0.8946);transform-origin:0 50%;"><u>5</u>. Khác</div>
<div class="x" style="top:407.84px;font-size:12px;left:20.60px;transform:scaleX(0.9557);transform-origin:0 50%;font-weight:bold;"><u>1</u>. Hàng tiền</div>
<div class="x" style="top:404.84px;font-size:12px;left:754.70px;transform:scaleX(0.9014);transform-origin:0 50%;">Loại tiền</div>
<div class="b" style="left:808px;top:393px;width:58px;height:21px;background:#fff;border:1px solid #7a9fd5;"></div>
<div class="b" style="left:849px;top:394px;width:16px;height:19px;background:#afc8e8;"></div>
<svg class="b" style="left:853.9000000000001px;top:402px" width="7.6" height="4.2" viewBox="0 0 7.6 4.2"><polygon points="0,0 7.6,0 3.8,4.2" fill="#0a0a0a"/></svg>
<div class="x" style="top:403.84px;font-size:12px;left:814.80px;transform:scaleX(0.8444);transform-origin:0 50%;">VND</div>
<div class="x" style="top:404.84px;font-size:12px;left:874.50px;transform:scaleX(0.9331);transform-origin:0 50%;">Tỷ giá</div>
<div class="b" style="left:920px;top:393px;width:80px;height:21px;background:#e3e3e3;border:1px solid #a9bad3;"></div>
<div class="x" style="top:404.84px;font-size:12px;left:975.20px;transform:scaleX(0.8904);transform-origin:0 50%;">1,00</div>
<div class="b" style="left:9px;top:417px;width:991px;height:230px;background:#fff;border:1px solid #7fa3d6;"></div>
<div class="b" style="left:10px;top:418px;width:989px;height:19px;background:#afc8e8;"></div>
<div class="b" style="left:10px;top:437px;width:989px;height:1px;background:#7fa3d6;"></div>
<div class="b" style="left:10px;top:438px;width:989px;height:19px;background:#fffde3;"></div>
<div class="b" style="left:10px;top:457px;width:989px;height:1px;border-top:1px dotted #bdbdbd;"></div>
<div class="b" style="left:10px;top:477px;width:989px;height:1px;border-top:1px dotted #bdbdbd;"></div>
<div class="b" style="left:10px;top:497px;width:989px;height:1px;border-top:1px dotted #bdbdbd;"></div>
<div class="b" style="left:10px;top:517px;width:989px;height:1px;border-top:1px dotted #bdbdbd;"></div>
<div class="b" style="left:10px;top:537px;width:989px;height:1px;border-top:1px dotted #bdbdbd;"></div>
<div class="b" style="left:10px;top:557px;width:989px;height:1px;border-top:1px dotted #bdbdbd;"></div>
<div class="b" style="left:10px;top:577px;width:989px;height:1px;border-top:1px dotted #bdbdbd;"></div>
<div class="b" style="left:10px;top:597px;width:989px;height:1px;border-top:1px dotted #bdbdbd;"></div>
<div class="b" style="left:339px;top:438px;width:1px;height:173px;border-left:1px dotted #bdbdbd;"></div>
<div class="b" style="left:339px;top:418px;width:1px;height:19px;background:#7fa3d6;"></div>
<div class="b" style="left:459px;top:438px;width:1px;height:173px;border-left:1px dotted #bdbdbd;"></div>
<div class="b" style="left:459px;top:418px;width:1px;height:19px;background:#7fa3d6;"></div>
<div class="b" style="left:554px;top:438px;width:1px;height:173px;border-left:1px dotted #bdbdbd;"></div>
<div class="b" style="left:554px;top:418px;width:1px;height:19px;background:#7fa3d6;"></div>
<div class="b" style="left:674px;top:438px;width:1px;height:173px;border-left:1px dotted #bdbdbd;"></div>
<div class="b" style="left:674px;top:418px;width:1px;height:19px;background:#7fa3d6;"></div>
<div class="b" style="left:754px;top:438px;width:1px;height:173px;border-left:1px dotted #bdbdbd;"></div>
<div class="b" style="left:754px;top:418px;width:1px;height:19px;background:#7fa3d6;"></div>
<div class="b" style="left:864px;top:438px;width:1px;height:173px;border-left:1px dotted #bdbdbd;"></div>
<div class="b" style="left:864px;top:418px;width:1px;height:19px;background:#7fa3d6;"></div>
<div class="b" style="left:974px;top:438px;width:1px;height:173px;border-left:1px dotted #bdbdbd;"></div>
<div class="b" style="left:974px;top:418px;width:1px;height:19px;background:#7fa3d6;"></div>
<div class="b" style="left:129px;top:418px;width:1px;height:19px;background:#7fa3d6;"></div>
<div class="x" style="top:427.84px;font-size:12px;left:44.10px;transform:scaleX(0.8586);transform-origin:0 50%;">Mã hàng</div>
<div class="x" style="top:427.84px;font-size:12px;left:208.00px;transform:scaleX(0.8540);transform-origin:0 50%;">Tên hàng</div>
<div class="x" style="top:427.84px;font-size:12px;left:348.60px;transform:scaleX(0.8988);transform-origin:0 50%;">TK công nợ/chi phí</div>
<div class="x" style="top:427.84px;font-size:12px;left:469.30px;transform:scaleX(0.8911);transform-origin:0 50%;">TK doanh thu</div>
<div class="x" style="top:427.84px;font-size:12px;left:585.00px;transform:scaleX(0.8716);transform-origin:0 50%;">Đối tượng</div>
<div class="x" style="top:427.84px;font-size:12px;left:698.30px;transform:scaleX(0.8917);transform-origin:0 50%;">ĐVT</div>
<div class="x" style="top:427.84px;font-size:12px;left:784.10px;transform:scaleX(0.8293);transform-origin:0 50%;">Số lượng</div>
<div class="x" style="top:427.84px;font-size:12px;left:895.00px;transform:scaleX(0.8690);transform-origin:0 50%;">Đơn giá</div>
<svg class="b" style="left:329px;top:424px" width="9" height="7" viewBox="0 0 9 7"><g shape-rendering="crispEdges" fill="#0a0a0a"><rect x="0" y="3" width="3" height="1"/><rect x="3" y="0" width="1" height="7"/><rect x="4" y="1" width="5" height="1"/><rect x="8" y="1" width="1" height="5"/><rect x="4" y="4" width="5" height="2"/></g></svg>
<svg class="b" style="left:449px;top:424px" width="9" height="7" viewBox="0 0 9 7"><g shape-rendering="crispEdges" fill="#0a0a0a"><rect x="0" y="3" width="3" height="1"/><rect x="3" y="0" width="1" height="7"/><rect x="4" y="1" width="5" height="1"/><rect x="8" y="1" width="1" height="5"/><rect x="4" y="4" width="5" height="2"/></g></svg>
<svg class="b" style="left:544px;top:424px" width="9" height="7" viewBox="0 0 9 7"><g shape-rendering="crispEdges" fill="#0a0a0a"><rect x="0" y="3" width="3" height="1"/><rect x="3" y="0" width="1" height="7"/><rect x="4" y="1" width="5" height="1"/><rect x="8" y="1" width="1" height="5"/><rect x="4" y="4" width="5" height="2"/></g></svg>
<svg class="b" style="left:664px;top:424px" width="9" height="7" viewBox="0 0 9 7"><g shape-rendering="crispEdges" fill="#0a0a0a"><rect x="0" y="3" width="3" height="1"/><rect x="3" y="0" width="1" height="7"/><rect x="4" y="1" width="5" height="1"/><rect x="8" y="1" width="1" height="5"/><rect x="4" y="4" width="5" height="2"/></g></svg>
<svg class="b" style="left:744px;top:424px" width="9" height="7" viewBox="0 0 9 7"><g shape-rendering="crispEdges" fill="#0a0a0a"><rect x="0" y="3" width="3" height="1"/><rect x="3" y="0" width="1" height="7"/><rect x="4" y="1" width="5" height="1"/><rect x="8" y="1" width="1" height="5"/><rect x="4" y="4" width="5" height="2"/></g></svg>
<svg class="b" style="left:854px;top:424px" width="9" height="7" viewBox="0 0 9 7"><g shape-rendering="crispEdges" fill="#0a0a0a"><rect x="0" y="3" width="3" height="1"/><rect x="3" y="0" width="1" height="7"/><rect x="4" y="1" width="5" height="1"/><rect x="8" y="1" width="1" height="5"/><rect x="4" y="4" width="5" height="2"/></g></svg>
<svg class="b" style="left:964px;top:424px" width="9" height="7" viewBox="0 0 9 7"><g shape-rendering="crispEdges" fill="#0a0a0a"><rect x="0" y="3" width="3" height="1"/><rect x="3" y="0" width="1" height="7"/><rect x="4" y="1" width="5" height="1"/><rect x="8" y="1" width="1" height="5"/><rect x="4" y="4" width="5" height="2"/></g></svg>
<svg class="b" style="left:120px;top:423px" width="7" height="9" viewBox="0 0 7 9"><g shape-rendering="crispEdges" fill="#0a0a0a"><rect x="3" y="6" width="1" height="3"/><rect x="0" y="5" width="7" height="1"/><rect x="1" y="0" width="1" height="5"/><rect x="1" y="0" width="5" height="1"/><rect x="4" y="0" width="2" height="5"/></g></svg>
<div class="x" style="top:447.84px;font-size:12px;left:13.40px;transform:scaleX(0.8969);transform-origin:0 50%;">Bấm vào đây để thêm mới</div>
<div class="b" style="left:129px;top:438px;width:1px;height:190px;background:#737373;"></div>
<div class="b" style="left:10px;top:611px;width:989px;height:1px;background:#7fa3d6;"></div>
<div class="b" style="left:10px;top:612px;width:119px;height:16px;background:#d6d6d6;"></div>
<div class="b" style="left:130px;top:612px;width:624px;height:16px;background:#efefef;"></div>
<div class="b" style="left:754px;top:612px;width:1px;height:16px;background:#7fa3d6;"></div>
<div class="b" style="left:755px;top:612px;width:109px;height:16px;background:#d6d6d6;"></div>
<div class="b" style="left:864px;top:612px;width:1px;height:16px;background:#7fa3d6;"></div>
<div class="b" style="left:865px;top:612px;width:109px;height:16px;background:#efefef;"></div>
<div class="b" style="left:974px;top:612px;width:1px;height:16px;background:#7fa3d6;"></div>
<div class="b" style="left:975px;top:612px;width:24px;height:16px;background:#d6d6d6;"></div>
<div class="x" style="top:619.84px;font-size:12px;left:13.90px;transform:scaleX(0.8868);transform-origin:0 50%;">Số dòng = 0</div>
<div class="x" style="top:619.84px;font-size:12px;left:840.40px;transform:scaleX(0.8690);transform-origin:0 50%;">0,00</div>
<div class="b" style="left:10px;top:628px;width:989px;height:18px;background:#afc8e8;"></div>
<div class="b" style="left:10px;top:628px;width:989px;height:1px;background:#7fa3d6;"></div>
<div class="b" style="left:523px;top:629px;width:459px;height:17px;background:#d6d6d6;"></div>
<svg class="b" style="left:16px;top:634px" width="4" height="7" viewBox="0 0 4 7"><polygon points="4,0 4,7 0,3.5" fill="#0a0a0a"/></svg>
<svg class="b" style="left:989px;top:634px" width="4" height="7" viewBox="0 0 4 7"><polygon points="0,0 0,7 4,3.5" fill="#0a0a0a"/></svg>
<div class="b" style="left:9px;top:656px;width:120px;height:23px;background:#afc8e8;border:1px solid #7fa5dc;"></div>
<div class="b" style="left:9px;top:685px;width:120px;height:23px;background:#afc8e8;border:1px solid #7fa5dc;"></div>
<div class="x" style="top:667.84px;font-size:12px;left:17.40px;transform:scaleX(0.9055);transform-origin:0 50%;">Phân bổ chiết khấu...</div>
<div class="x" style="top:696.84px;font-size:12px;left:37.00px;transform:scaleX(0.8900);transform-origin:0 50%;">Xem công nợ</div>
<div class="x" style="top:672.34px;font-size:12px;left:279.20px;transform:scaleX(0.9211);transform-origin:0 50%;font-weight:bold;">Tổng tiền hàng</div>
<div class="x" style="top:695.34px;font-size:12px;left:279.20px;transform:scaleX(0.9295);transform-origin:0 50%;font-weight:bold;">Tiền chiết khấu</div>
<div class="x" style="top:672.34px;font-size:12px;left:633.30px;transform:scaleX(0.9401);transform-origin:0 50%;font-weight:bold;">Tiền thuế GTGT</div>
<div class="x" style="top:695.34px;font-size:12px;left:633.30px;transform:scaleX(0.9103);transform-origin:0 50%;font-weight:bold;">Tổng tiền thanh toán</div>
<div class="x" style="top:671.34px;font-size:12px;left:483.20px;transform:scaleX(0.8993);transform-origin:0 50%;">0</div>
<div class="x" style="top:694.34px;font-size:12px;left:483.20px;transform:scaleX(0.8993);transform-origin:0 50%;">0</div>
<div class="x" style="top:671.34px;font-size:12px;left:863.10px;transform:scaleX(0.8993);transform-origin:0 50%;">0</div>
<div class="x" style="top:694.34px;font-size:12px;left:863.10px;transform:scaleX(0.8993);transform-origin:0 50%;">0</div>
<div class="x" style="top:727.84px;font-size:12px;left:5.00px;transform:scaleX(0.9151);transform-origin:0 50%;">F9 - Thêm nhanh, F3 - Tìm nhanh</div>
<div class="b" style="left:1007px;top:729px;width:2px;height:2px;background:#fff;"></div>
<div class="b" style="left:1006px;top:728px;width:2px;height:2px;background:#2b4470;"></div>
<div class="b" style="left:1003px;top:733px;width:2px;height:2px;background:#fff;"></div>
<div class="b" style="left:1002px;top:732px;width:2px;height:2px;background:#2b4470;"></div>
<div class="b" style="left:1007px;top:733px;width:2px;height:2px;background:#fff;"></div>
<div class="b" style="left:1006px;top:732px;width:2px;height:2px;background:#2b4470;"></div>
<div class="b" style="left:999px;top:737px;width:2px;height:2px;background:#fff;"></div>
<div class="b" style="left:998px;top:736px;width:2px;height:2px;background:#2b4470;"></div>
<div class="b" style="left:1003px;top:737px;width:2px;height:2px;background:#fff;"></div>
<div class="b" style="left:1002px;top:736px;width:2px;height:2px;background:#2b4470;"></div>
<div class="b" style="left:1007px;top:737px;width:2px;height:2px;background:#fff;"></div>
<div class="b" style="left:1006px;top:736px;width:2px;height:2px;background:#2b4470;"></div>
</body>
</html>
